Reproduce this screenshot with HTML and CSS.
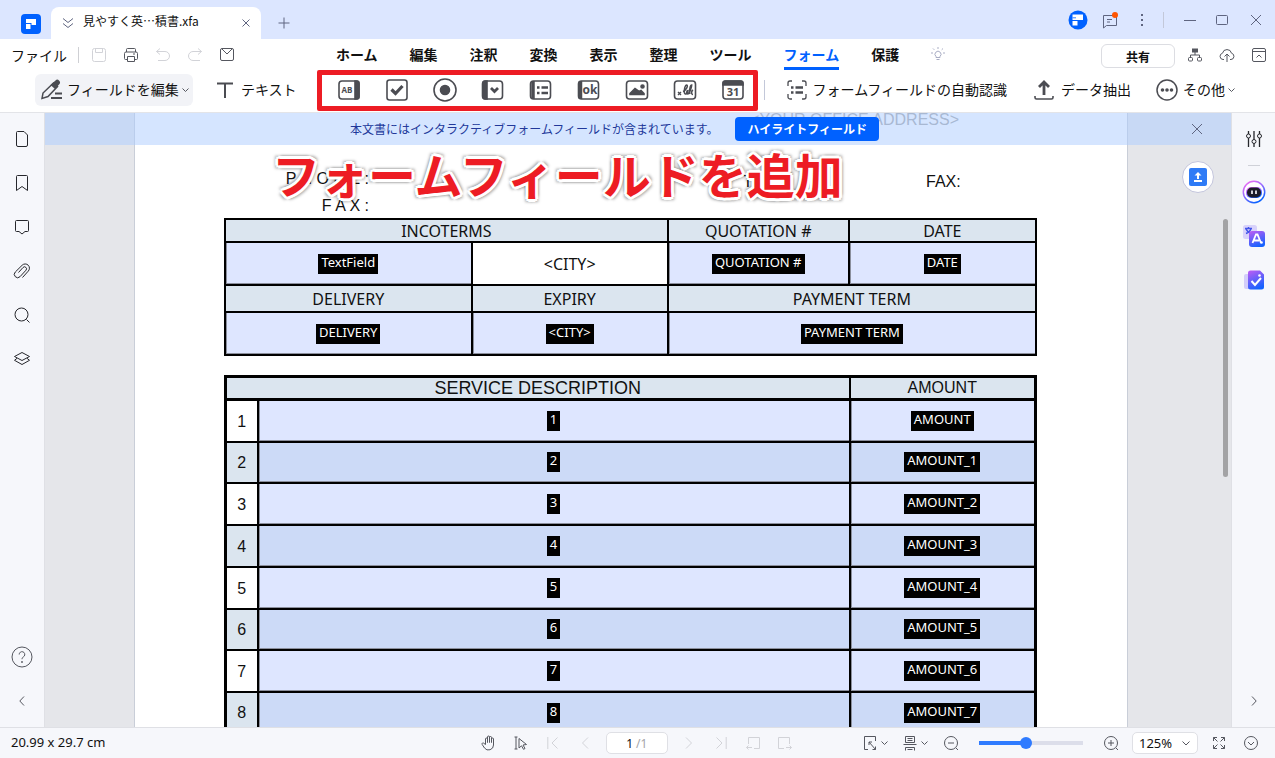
FILE: index.html
```html
<!DOCTYPE html>
<html lang="ja">
<head>
<meta charset="utf-8">
<meta name="viewport" content="width=device-width, initial-scale=1">
<title>見やすく英…積書.xfa</title>
<link rel="stylesheet" href="styles.css">
</head>
<body>
<header class="titlebar">
  <svg class="app-logo" width="20" height="20" viewBox="0 0 20 20"><rect width="20" height="20" rx="4" fill="#0061ff"/><path d="M5 5h10v6h-4.500V9H5z" fill="#fff"/><path d="M5 10h4.500v5H5z" fill="#fff"/></svg>
  <div class="doc-tab">
    <svg width="12" height="12" viewBox="0 0 12 12" class="line muted"><path d="M1 1.500l5 4 5-4M1 6.500l5 4 5-4"/></svg>
    <span class="doc-name">見やすく英…積書.xfa</span>
    <button class="tab-close" aria-label="閉じる"><svg width="8" height="8" viewBox="0 0 8 8" class="line muted"><path d="M.5.5l7 7M7.500.5l-7 7"/></svg></button>
  </div>
  <button class="icon-btn" aria-label="新しいタブ"><svg width="12" height="12" viewBox="0 0 12 12" class="line muted"><path d="M6 .5v11M.5 6h11"/></svg></button>
  <div class="window-tools">
    <button class="icon-btn" aria-label="アカウント"><svg width="20" height="20" viewBox="0 0 20 20"><circle cx="10" cy="10" r="9.500" fill="#0061ff"/><path d="M4.500 4.500H15V10H4.500z" fill="#fff"/><path d="M4.500 11h5v4.500h-5z" fill="#fff"/><path d="M4.500 7.800H8" stroke="#0061ff" stroke-width=".8"/></svg></button>
    <button class="icon-btn" aria-label="お知らせ"><svg width="18" height="18" viewBox="0 0 18 18"><g class="line muted"><path d="M2.500 4.500h13v10h-10l-3 2.500z"/><path d="M6 8.500h5M6 11h3"/></g><circle cx="14" cy="4" r="3" fill="#ff5500"/></svg></button>
    <button class="icon-btn" aria-label="メニュー"><svg width="4" height="14" viewBox="0 0 4 14" fill="#5f6580"><rect x="1" y="1" width="2" height="2"/><rect x="1" y="6" width="2" height="2"/><rect x="1" y="11" width="2" height="2"/></svg></button>
    <span class="divider"></span>
    <button class="icon-btn" aria-label="最小化"><svg width="12" height="12" viewBox="0 0 12 12" class="line muted"><path d="M0 6.500h12"/></svg></button>
    <button class="icon-btn" aria-label="最大化"><svg width="12" height="12" viewBox="0 0 12 12" class="line muted"><rect x=".5" y="1.500" width="11" height="9" rx="1"/></svg></button>
    <button class="icon-btn window-close" aria-label="ウィンドウを閉じる"><svg width="12" height="12" viewBox="0 0 12 12" class="line muted"><path d="M1 1l10 10M11 1L1 11"/></svg></button>
  </div>
</header>

<div class="menubar">
  <button class="file-btn">ファイル</button>
  <span class="divider"></span>
  <div class="quick">
    <button class="icon-btn" disabled aria-label="保存"><svg width="16" height="16" viewBox="0 0 16 16" class="line faint"><rect x="1.500" y="1.500" width="13" height="13" rx="2"/><path d="M4.500 1.500v4h7v-4"/></svg></button>
    <button class="icon-btn" aria-label="印刷"><svg width="16" height="16" viewBox="0 0 16 16" class="line"><path d="M3.500 5V2.500a1 1 0 011-1h7a1 1 0 011 1V5M4 12.500H2.500a1 1 0 01-1-1v-5a1.500 1.500 0 011.500-1.500h10a1.500 1.500 0 011.500 1.500v5a1 1 0 01-1 1H12M4.500 9.500h7v5h-7zM10 7h2"/></svg></button>
    <button class="icon-btn" disabled aria-label="元に戻す"><svg width="16" height="16" viewBox="0 0 16 16" class="line faint"><path d="M5 1.500l-3.500 3L5 7.500M1.500 4.500H10a4.500 4.500 0 010 9H3"/></svg></button>
    <button class="icon-btn" disabled aria-label="やり直し"><svg width="16" height="16" viewBox="0 0 16 16" class="line faint"><path d="M11 1.500l3.500 3L11 7.500M14.500 4.500H6a4.500 4.500 0 000 9h7"/></svg></button>
    <button class="icon-btn" aria-label="メール"><svg width="16" height="16" viewBox="0 0 16 16" class="line"><rect x="1.500" y="1.500" width="13" height="12" rx="1.500"/><path d="M3 2l5 5 5-5"/></svg></button>
  </div>
  <nav class="ribbon-tabs">
    <button>ホーム</button><button>編集</button><button>注釈</button><button>変換</button><button>表示</button><button>整理</button><button>ツール</button><button class="active">フォーム</button><button>保護</button>
    <button aria-label="ヒント"><svg width="14" height="14" viewBox="0 0 14 14" class="line hint"><path d="M5 9.500a3 3 0 114 0v1H5zM5.500 12.500h3M7 0v2M0 6h2M12 6h2M2 1.500l1.300 1.300M12 1.500l-1.300 1.300"/></svg></button>
  </nav>
  <button class="share-btn">共有</button>
  <button class="icon-btn" aria-label="構成"><svg width="16" height="16" viewBox="0 0 16 16" class="line"><rect x="5.500" y="2" width="5" height="3" fill="#55575f"/><path d="M8 5v3M3.500 10V8h9v2"/><rect x="1.500" y="10.500" width="4" height="3.500" rx="1"/><rect x="10.500" y="10.500" width="4" height="3.500" rx="1"/></svg></button>
  <button class="icon-btn" aria-label="クラウド"><svg width="16" height="16" viewBox="0 0 16 16" class="line"><path d="M5 12.500H4a3.200 3.200 0 01-.5-6.300 4.600 4.600 0 019 0A3.200 3.200 0 0112 12.500h-1M8 15V7.500M5.500 9.500L8 7l2.500 2.500"/></svg></button>
  <button class="icon-btn" aria-label="折りたたむ"><svg width="16" height="16" viewBox="0 0 16 16" class="line"><rect x="1.500" y="1.500" width="13" height="13" rx="1.500"/><path d="M1.500 4.500h13M5.500 10.500l2.500-2.500 2.500 2.500"/></svg></button>
</div>

<div class="toolbar">
  <button class="tool-btn edit-btn"><svg width="24" height="22" viewBox="0 0 24 22"><path d="M2 19.500l1-5.500L13.500 4l4 3.500L8 17.500z" fill="none" stroke="#4b4c52" stroke-width="1.500"/><path d="M10.500 6l5-4.500a2.400 2.400 0 013.500 0 2.600 2.600 0 01.500 3.500l-4.500 5z" fill="#4b4c52"/><path d="M15 14.500h7M11 19h11" stroke="#4b4c52" stroke-width="2"/></svg><span>フィールドを編集</span><svg width="7" height="5" viewBox="0 0 7 5" class="line"><path d="M.5.5l3 3 3-3"/></svg></button>
  <button class="tool-btn text-btn"><svg width="16" height="16" viewBox="0 0 16 16" fill="none" stroke="#4b4c52" stroke-width="2"><path d="M0 1.500h16M8 1.500V16"/></svg><span>テキスト</span></button>
  <div class="field-tools">
    <button aria-label="テキストフィールド"><svg width="24" height="24" viewBox="0 0 24 24" class="tool"><rect x="2" y="3" width="20" height="18" rx="3"/><path d="M18 3h2a2 2 0 012 2v14a2 2 0 01-2 2h-2z" class="solid"/><text x="10" y="15" font-size="8" font-weight="700" text-anchor="middle" class="icon-text">AB</text></svg></button>
    <button aria-label="チェックボックス"><svg width="24" height="24" viewBox="0 0 24 24" class="tool"><rect x="2" y="2" width="20" height="20" rx="2.500"/><path d="M6.500 11.500l4 4 7-7.500" stroke-width="3.200"/></svg></button>
    <button aria-label="ラジオボタン"><svg width="24" height="24" viewBox="0 0 24 24" class="tool"><circle cx="12" cy="12" r="11"/><circle cx="12" cy="12" r="4.500" class="solid"/></svg></button>
    <button aria-label="コンボボックス"><svg width="24" height="24" viewBox="0 0 24 24" class="tool"><rect x="1.500" y="3" width="20" height="18" rx="3"/><path d="M6 3H4a2 2 0 00-2 2v14a2 2 0 002 2h2z" class="solid"/><path d="M10 10l3.500 3.500 3.500-3.500" stroke-width="2.800"/></svg></button>
    <button aria-label="リストボックス"><svg width="24" height="24" viewBox="0 0 24 24" class="tool"><rect x="1.500" y="3" width="20" height="18" rx="3"/><path d="M4 3v18" stroke-width="3.500"/><path d="M8 9.500h2.500M12.500 9.500H19M8 15h2.500M12.500 15H19" stroke-width="2.400"/></svg></button>
    <button aria-label="プッシュボタン"><svg width="24" height="24" viewBox="0 0 24 24" class="tool"><rect x="1.500" y="3" width="20" height="18" rx="3"/><path d="M3.500 3v18" stroke-width="3.500"/><text x="13" y="16" font-size="12" font-weight="700" text-anchor="middle" class="icon-text">ok</text></svg></button>
    <button aria-label="画像フィールド"><svg width="24" height="24" viewBox="0 0 24 24" class="tool"><rect x="1.500" y="3" width="21" height="18" rx="3"/><path d="M5 16.500v-1l5-5 4 3 2-1 3 3v1z" class="solid"/><circle cx="17.500" cy="8.500" r="1.500" class="solid"/></svg></button>
    <button aria-label="署名フィールド"><svg width="24" height="24" viewBox="0 0 24 24" class="tool"><rect x="1.500" y="3" width="21" height="18" rx="3"/><path d="M5 14l3 3M8 14l-3 3" stroke-width="1.400"/><path d="M10 13.500c3-1 5.500-6 3.800-6.500-1.800 0-3 5-2.300 8 .8 2.500 3.500 0 3.500-2.500-1.500 0-2 3.500-.3 3.500 2 0 4-7 4-9-1.700 0-2.700 6.500-1.700 9M20 12c-1.800 1-2 4.500 0 4.500" stroke-width="1.500"/></svg></button>
    <button aria-label="日付フィールド"><svg width="24" height="24" viewBox="0 0 24 24" class="tool"><rect x="2" y="3" width="20" height="18" rx="3"/><path d="M2 5a2 2 0 012-2h16a2 2 0 012 2v2H2z" class="solid"/><text x="12" y="18" font-size="11" font-weight="700" text-anchor="middle" class="icon-text">31</text></svg></button>
  </div>
  <span class="divider"></span>
  <button class="tool-btn auto-btn"><svg width="20" height="20" viewBox="0 0 20 20" class="tool"><path d="M5 1H3a2 2 0 00-2 2v3M15 1h2a2 2 0 012 2v3M5 19H3a2 2 0 01-2-2v-3M15 19h2a2 2 0 002-2v-3" stroke-width="1.300"/><path d="M4 7.500h2.500M8.500 7.500H16M4 12.500h2.500M8.500 12.500H16" stroke-width="2.400"/></svg><span>フォームフィールドの自動認識</span></button>
  <button class="tool-btn extract-btn"><svg width="20" height="20" viewBox="0 0 20 20" class="tool"><path d="M10 15V2M5 7l5-5 5 5" stroke-width="2.800"/><path d="M1 16v1.500a1.500 1.500 0 001.500 1.500h15a1.500 1.500 0 001.500-1.500V16"/></svg><span>データ抽出</span></button>
  <button class="tool-btn other-btn"><svg width="22" height="22" viewBox="0 0 22 22" class="tool"><circle cx="11" cy="11" r="10" stroke-width="1.500"/><circle cx="6.500" cy="11" r="1" class="solid"/><circle cx="11" cy="11" r="1" class="solid"/><circle cx="15.500" cy="11" r="1" class="solid"/></svg><span>その他</span><svg width="7" height="5" viewBox="0 0 7 5" class="line"><path d="M.5.5l3 3 3-3"/></svg></button>
</div>

<main class="workspace">
  <aside class="rail rail-left">
    <button aria-label="サムネイル"><svg width="18" height="18" viewBox="0 0 18 18" class="line dark"><path d="M4.500 1.500h6.500l3.500 3.500v10a1.500 1.500 0 01-1.500 1.500H5A1.500 1.500 0 013.500 15V2.500a1 1 0 011-1z"/></svg></button>
    <button aria-label="ブックマーク"><svg width="18" height="18" viewBox="0 0 18 18" class="line dark"><path d="M3.500 16.500V2.500a1 1 0 011-1h9a1 1 0 011 1v14L9 12.500z"/></svg></button>
    <button aria-label="コメント"><svg width="18" height="18" viewBox="0 0 18 18" class="line dark"><path d="M3.500 2.500h11a1 1 0 011 1v9a1 1 0 01-1 1H12l-3 2.500-3-2.500H3.500a1 1 0 01-1-1v-9a1 1 0 011-1z"/></svg></button>
    <button aria-label="添付ファイル"><svg width="18" height="18" viewBox="0 0 18 18" class="line dark"><path d="M9.500 15.500l5.700-6.300a4.200 4.200 0 00-6-6L2.300 10a3.300 3.300 0 004.700 4.700l6-6.500a2 2 0 00-3-2.700L5.500 10.500"/></svg></button>
    <button aria-label="検索"><svg width="18" height="18" viewBox="0 0 18 18" class="line dark"><circle cx="8.500" cy="8.500" r="6.500"/><path d="M13.500 13.500l3 3"/></svg></button>
    <button aria-label="レイヤー"><svg width="18" height="18" viewBox="0 0 18 18" class="line dark"><path d="M9 2.500l7.500 4-7.500 4-7.500-4zM4 8.300l-2.500 2L9 14.500l7.500-4.200-2.500-2"/></svg></button>
    <button class="push-down" aria-label="ヘルプ"><svg width="22" height="22" viewBox="0 0 22 22" class="line"><circle cx="11" cy="11" r="10"/><path d="M8.200 8.500a2.800 2.800 0 115 1.700c-1 .9-2.200 1.300-2.200 3"/><circle cx="11" cy="16" r=".6"/></svg></button>
    <button aria-label="左パネル"><svg width="6" height="10" viewBox="0 0 6 10" class="line"><path d="M5 .5L.8 5 5 9.500"/></svg></button>
  </aside>

  <section class="viewer">
    <div class="sheet">
      <p class="office">&lt;YOUR OFFICE ADDRESS&gt;</p>
      <div class="contact">
        <div class="contact-left"><p>P H O N E :</p><p>F A X :</p></div>
        <span></span>
        <p>TEL:</p>
        <p>FAX:</p>
      </div>
      <table class="terms">
        <colgroup><col class="c1"><col class="c2"><col class="c3"><col class="c4"></colgroup>
        <tr class="head"><th colspan="2">INCOTERMS</th><th>QUOTATION #</th><th>DATE</th></tr>
        <tr class="entry"><td class="field"><span class="chip">TextField</span></td><td class="plain">&lt;CITY&gt;</td><td class="field"><span class="chip">QUOTATION #</span></td><td class="field"><span class="chip">DATE</span></td></tr>
        <tr class="head tall"><th>DELIVERY</th><th>EXPIRY</th><th colspan="2">PAYMENT TERM</th></tr>
        <tr class="entry"><td class="field"><span class="chip">DELIVERY</span></td><td class="field"><span class="chip">&lt;CITY&gt;</span></td><td class="field" colspan="2"><span class="chip">PAYMENT TERM</span></td></tr>
      </table>
      <table class="services">
        <colgroup><col class="n"><col><col class="amount"></colgroup>
        <thead><tr><th colspan="2" class="wide-head">SERVICE DESCRIPTION</th><th>AMOUNT</th></tr></thead>
        <tbody>
          <tr><th>1</th><td class="field"><span class="chip">1</span></td><td class="field"><span class="chip">AMOUNT</span></td></tr>
          <tr><th>2</th><td class="field"><span class="chip">2</span></td><td class="field"><span class="chip">AMOUNT_1</span></td></tr>
          <tr><th>3</th><td class="field"><span class="chip">3</span></td><td class="field"><span class="chip">AMOUNT_2</span></td></tr>
          <tr><th>4</th><td class="field"><span class="chip">4</span></td><td class="field"><span class="chip">AMOUNT_3</span></td></tr>
          <tr><th>5</th><td class="field"><span class="chip">5</span></td><td class="field"><span class="chip">AMOUNT_4</span></td></tr>
          <tr><th>6</th><td class="field"><span class="chip">6</span></td><td class="field"><span class="chip">AMOUNT_5</span></td></tr>
          <tr><th>7</th><td class="field"><span class="chip">7</span></td><td class="field"><span class="chip">AMOUNT_6</span></td></tr>
          <tr><th>8</th><td class="field"><span class="chip">8</span></td><td class="field"><span class="chip">AMOUNT_7</span></td></tr>
        </tbody>
      </table>
    </div>
    <div class="notice">
      <div class="notice-body"><span>本文書にはインタラクティブフォームフィールドが含まれています。</span><button class="highlight-btn">ハイライトフィールド</button></div>
      <button class="icon-btn" aria-label="通知を閉じる"><svg width="12" height="12" viewBox="0 0 12 12" class="line muted"><path d="M1 1l10 10M11 1L1 11"/></svg></button>
    </div>
    <p class="callout">フォームフィールドを追加</p>
    <button class="upload-btn" aria-label="アップロード"><svg width="18" height="18" viewBox="0 0 18 18"><rect width="18" height="18" rx="2" fill="#2f7bf6"/><path d="M9 4l3.500 3.500H10V11H8V7.500H5.500zM5 12h8v2H5z" fill="#fff"/></svg></button>
    <div class="scroll-thumb"></div>
  </section>

  <aside class="rail rail-right">
    <button aria-label="プロパティ"><svg width="18" height="18" viewBox="0 0 18 18" class="line dark"><path d="M3.500 1v3M3.500 8v9M9 1v8.500M9 13.500V17M14.500 1v3M14.500 8v9" stroke-width="1.300"/><circle cx="3.500" cy="6" r="2"/><circle cx="9" cy="11.500" r="2"/><circle cx="14.500" cy="6" r="2"/></svg></button>
    <span class="rail-rule"></span>
    <button aria-label="AIアシスタント"><svg width="24" height="24" viewBox="0 0 24 24"><defs><linearGradient id="ring" x1="0" y1="0" x2=".6" y2="1"><stop offset="0" stop-color="#ff6cf0"/><stop offset=".5" stop-color="#9a6bff"/><stop offset="1" stop-color="#0a62ff"/></linearGradient><linearGradient id="tile" x1=".2" y1="0" x2=".6" y2="1"><stop offset="0" stop-color="#b55cf5"/><stop offset="1" stop-color="#1263ff"/></linearGradient></defs><circle cx="12" cy="12" r="10.700" fill="#fff" stroke="url(#ring)" stroke-width="1.500"/><rect x="4" y="7" width="16" height="11" rx="5" fill="url(#ring)"/><rect x="5" y="7.500" width="14" height="10" rx="4.800" fill="#1c1c28"/><path d="M10 10.500v3.500M14 10.500v3.500" stroke="#fff" stroke-width="1.600"/></svg></button>
    <button aria-label="翻訳"><svg width="24" height="24" viewBox="0 0 24 24"><rect x="1" y="1" width="14" height="14" rx="2.500" fill="#d8d2fb"/><path d="M3 4.500h7M6.500 3v1.500M9 4.500c-.5 2-2.500 4-5 5M4 5c1 2 2.500 3.500 5 4" fill="none" stroke="#4355e8" stroke-width="1.400"/><rect x="7" y="7" width="16" height="16" rx="3" fill="url(#tile)"/><path d="M10.500 19L14 10.500h1.500L19 19M12 16.500h5" fill="none" stroke="#fff" stroke-width="1.800"/><circle cx="19.500" cy="18.500" r="1.300" fill="#fff"/></svg></button>
    <button aria-label="校正"><svg width="24" height="24" viewBox="0 0 24 24"><rect x="2" y="6" width="10" height="15" rx="2" fill="#d3cdfa"/><path d="M8.500 2.500H18l4 4V19a2.500 2.500 0 01-2.500 2.500h-11A2.500 2.500 0 016 19V5a2.500 2.500 0 012.500-2.500z" fill="url(#tile)"/><path d="M9.500 13l3.500 4 6-7" fill="none" stroke="#fff" stroke-width="2"/><circle cx="17.500" cy="7.500" r="1.300" fill="#fff"/></svg></button>
    <button class="push-down" aria-label="右パネル"><svg width="6" height="10" viewBox="0 0 6 10" class="line"><path d="M1 .5L5.200 5 1 9.500"/></svg></button>
  </aside>
</main>

<footer class="statusbar">
  <span class="page-size">20.99 x 29.7 cm</span>
  <div class="pager">
    <button class="icon-btn" aria-label="手のひら"><svg width="16" height="16" viewBox="0 0 16 16" class="line"><path d="M4.500 9.500V4a1 1 0 012 0v3.500V2a1 1 0 012 0v5.500V2.500a1 1 0 012 0v5V4a1 1 0 012 0v6a5 5 0 01-9 3L1.200 9.500a1 1 0 011.600-1.200z"/></svg></button>
    <button class="icon-btn" aria-label="選択"><svg width="14" height="14" viewBox="0 0 14 14" class="line"><path d="M.5 1h3M2 1v12M.5 13h3M5 2.500l7.500 6-3.500.5 2 3.500-1.500.8-2-3.500L5 12z"/></svg></button>
    <button class="icon-btn" disabled aria-label="最初のページ"><svg width="12" height="12" viewBox="0 0 12 12" class="line faint"><path d="M.8 0v12M10.500.5L5 6l5.500 5.500"/></svg></button>
    <button class="icon-btn" disabled aria-label="前のページ"><svg width="8" height="12" viewBox="0 0 8 12" class="line faint"><path d="M7 .5L1.500 6 7 11.500"/></svg></button>
    <div class="page-box"><input type="text" value="1" aria-label="ページ番号"><span>/1</span></div>
    <button class="icon-btn" disabled aria-label="次のページ"><svg width="8" height="12" viewBox="0 0 8 12" class="line faint"><path d="M1 .5L6.500 6 1 11.500"/></svg></button>
    <button class="icon-btn" disabled aria-label="最後のページ"><svg width="12" height="12" viewBox="0 0 12 12" class="line faint"><path d="M11.200 0v12M1.500.5L7 6l-5.500 5.500"/></svg></button>
    <button class="icon-btn" disabled aria-label="前の表示"><svg width="14" height="14" viewBox="0 0 14 14" class="line faint"><path d="M2.500 8V1.500h11v11H8M6 11.500H.5M2.500 9.500l-2 2 2 2"/></svg></button>
    <button class="icon-btn" disabled aria-label="次の表示"><svg width="14" height="14" viewBox="0 0 14 14" class="line faint"><path d="M11.500 8V1.500H.5v11H6M8 11.500h5.500M11.500 9.500l2 2-2 2"/></svg></button>
  </div>
  <div class="zoom">
    <button class="icon-btn wide" aria-label="表示サイズ"><svg width="14" height="16" viewBox="0 0 14 16" class="line"><path d="M5 14.500H1.500v-13h11V6M6 7l6.500 7.500M6 10V7h3M12.500 11.500v3h-3"/></svg><svg width="7" height="5" viewBox="0 0 7 5" class="line"><path d="M.5.500l3 3 3-3"/></svg></button>
    <button class="icon-btn wide" aria-label="ページ表示"><svg width="14" height="16" viewBox="0 0 14 16" class="line"><path d="M2.500 1.500h9v6h-9zM4.500 3.500h5M4.500 5.500h5M.5 9.500h13M2.500 15.500v-3h9v3M4.500 14.500h5"/></svg><svg width="7" height="5" viewBox="0 0 7 5" class="line"><path d="M.5.500l3 3 3-3"/></svg></button>
    <button class="icon-btn" aria-label="縮小"><svg width="16" height="16" viewBox="0 0 16 16" class="line"><circle cx="8" cy="8" r="6.500"/><path d="M5 8h6M13 13l2 2"/></svg></button>
    <input class="zoom-range" type="range" min="0" max="100" value="45" aria-label="ズーム">
    <button class="icon-btn" aria-label="拡大"><svg width="16" height="16" viewBox="0 0 16 16" class="line"><circle cx="8" cy="8" r="6.500"/><path d="M5 8h6M8 5v6M13 13l2 2"/></svg></button>
    <div class="zoom-select"><select aria-label="倍率"><option>125%</option></select><svg width="8" height="5" viewBox="0 0 8 5" class="line"><path d="M.5.500L4 4 7.500.500"/></svg></div>
    <button class="icon-btn" aria-label="全画面"><svg width="12" height="12" viewBox="0 0 12 12" class="line"><path d="M.5 4V.5H4M.5.5L4.500 4.500M8 .5h3.500V4M11.500.5l-4 4M.5 8v3.500H4M.5 11.500l4-4M8 11.500h3.500V8M11.500 11.500l-4-4"/></svg></button>
    <button class="icon-btn" aria-label="その他の表示"><svg width="16" height="16" viewBox="0 0 16 16" class="line"><circle cx="8" cy="8" r="6.500"/><path d="M5 7l3 3 3-3"/></svg></button>
  </div>
</footer>
</body>
</html>
```
FILE: styles.css
```css
* { box-sizing: border-box; }

body {
  margin: 0;
  height: 100vh;
  display: flex;
  flex-direction: column;
  overflow: hidden;
  background: #fff;
  color: #111;
  font-family: "Noto Sans", "Noto Sans CJK JP", sans-serif;
  font-size: 14px;
}

p { margin: 0; }

button {
  display: flex;
  align-items: center;
  justify-content: center;
  flex: none;
  padding: 0;
  border: 0;
  background: none;
  color: inherit;
  font: inherit;
  font-family: "Noto Sans CJK JP", sans-serif;
  white-space: nowrap;
}

svg { flex: none; }

.line { fill: none; stroke: #55575f; stroke-width: 1; }
.line.muted { stroke: #5f6580; }
.line.faint { stroke: #d2d3d8; }
.line.dark { stroke: #26272c; }
.line.hint { stroke: #a9adc4; }
.tool { fill: none; stroke: #4b4c52; stroke-width: 1.6; }
.tool .solid { fill: #4b4c52; }
.icon-text { fill: #4b4c52; stroke: none; font-family: "Open Sans", sans-serif; }

.icon-btn { width: 32px; height: 28px; }
.icon-btn.wide { width: 40px; gap: 4px; }

.divider { flex: none; width: 1px; height: 16px; background: #c3c8d9; }

/* Title bar */
.titlebar {
  flex: none;
  display: flex;
  align-items: center;
  height: 39px;
  padding: 0 3px 0 21px;
  background: #dce6ff;
}
.app-logo { margin-top: 8px; }
.doc-tab {
  align-self: flex-end;
  display: flex;
  align-items: center;
  width: 210px;
  height: 32px;
  margin: 0 7px 0 10px;
  padding: 0 10px 0 11px;
  border-radius: 8px 8px 0 0;
  background: #fff;
}
.doc-name {
  flex: 1;
  margin-left: 9px;
  padding-bottom: 4px;
  font: 12px/26px "Noto Sans CJK JP", sans-serif;
}
.tab-close { width: 10px; height: 16px; }
.titlebar > .icon-btn { margin-top: 6px; }
.window-tools { display: flex; align-items: center; margin-left: auto; }
.window-tools .divider { margin: 0 10px 0 5px; }
.window-close { margin-left: 2px; }

/* Menu bar */
.menubar { flex: none; display: flex; align-items: center; height: 31px; }
.file-btn { height: 30px; padding: 0 11px; }
.menubar > .divider { background: #cfd0d4; }
.quick { display: flex; margin-left: 4px; }
.ribbon-tabs { display: flex; align-self: stretch; gap: 32px; margin: 0 auto 0 93px; }
.ribbon-tabs button { font-weight: 700; border-bottom: 3px solid transparent; padding-top: 2px; }
.ribbon-tabs .active { color: #0061ff; border-color: #0061ff; }
.share-btn {
  width: 74px;
  height: 24px;
  margin: 3px 4px 0 0;
  border: 1px solid #dcdde2;
  border-radius: 6px;
  font-size: 12px;
  font-weight: 700;
}

/* Form toolbar */
.toolbar {
  flex: none;
  display: flex;
  align-items: center;
  height: 43px;
  padding: 0 0 2px 35px;
  border-bottom: 1px solid #e3e4e8;
}
.tool-btn { height: 32px; }
.tool-btn span { padding-bottom: 3px; }
.edit-btn {
  width: 158px;
  gap: 3px;
  justify-content: flex-start;
  padding-left: 5px;
  border-radius: 6px;
  background: #f2f3f7;
}
.text-btn { gap: 8px; margin-left: 24px; }
.field-tools {
  flex: none;
  display: flex;
  align-items: center;
  gap: 12px;
  height: 41px;
  margin-left: 20px;
  padding: 0 2px 0 9px;
  border: 5px solid #ed1c24;
  border-radius: 2px;
}
.field-tools button { width: 36px; height: 28px; }
.toolbar > .divider { margin: 0 22px 0 6px; height: 20px; }
.auto-btn { gap: 6px; }
.extract-btn { gap: 7px; margin-left: 27px; }
.other-btn { gap: 5px; margin-left: 25px; }
.other-btn svg:last-child { margin-left: -2px; }

/* Workspace */
.workspace { flex: 1; min-height: 0; display: flex; }
.rail {
  flex: none;
  display: flex;
  flex-direction: column;
  align-items: center;
  width: 45px;
  padding: 4px 0;
  background: #f6f7fb;
}
.rail button { width: 44px; height: 44px; }
.rail .push-down { margin-top: auto; }
.rail-left { border-right: 1px solid #dfe0e5; }
.rail-right { width: 44px; border-left: 1px solid #dfe0e5; }
.rail-rule { width: 12px; height: 1px; margin: 4px 0; background: #cfd1d8; }

.viewer {
  position: relative;
  flex: 1;
  min-width: 0;
  overflow: hidden;
  display: flex;
  padding: 0 103px 0 89px;
  background: #e5e6ea;
}
.sheet {
  flex: 1;
  min-width: 0;
  padding: 0 90px 0 89px;
  border: solid #c9ced8;
  border-width: 0 1px;
  background: #fff;
  font-family: "Liberation Sans", sans-serif;
  font-size: 16px;
}
.office { height: 52px; padding-right: 78px; line-height: 14px; text-align: right; color: #a5a5a5; }
.contact { display: grid; grid-template-columns: 145px 374px 183px 1fr; line-height: 34px; height: 53px; }
.contact-left { text-align: right; line-height: 27px; }

.sheet table { width: 100%; table-layout: fixed; border-collapse: collapse; text-align: center; }
.sheet th, .sheet td { padding: 0; border: 2px solid #000; font-weight: 400; line-height: 20px; }
.terms { font-family: "Noto Sans", sans-serif; }
.terms .c1 { width: 30.4%; }
.terms .c2 { width: 24.2%; }
.terms .c3 { width: 22.3%; }
.terms .head { height: 23px; background: #dbe5ef; }
.terms .tall { height: 27px; }
.terms .entry { height: 43px; }
.sheet .field { background: #dee6ff; box-shadow: inset 1px -1px #8b8f9c; }
.chip {
  display: inline-block;
  height: 20px;
  padding: 0 3px;
  background: #000;
  color: #fff;
  font: 13px/17px "Noto Sans", sans-serif;
  vertical-align: middle;
}

.services { margin-top: 19px; border: 3px solid #000; }
.services .n { width: 32px; }
.services .amount { width: 186px; }
.services thead { background: #dbe5ef; }
.sheet .services thead th { height: 22px; border-top-width: 3px; border-bottom-width: 3px; }
.services .wide-head { font-size: 18px; }
.services tbody tr { height: 42px; }
.services tbody th { padding-top: 2px; }
.services tbody tr:nth-child(even) { background: #dbe5ef; }
.services tbody tr:nth-child(4n + 2) { height: 41px; }
.services tbody tr:nth-child(even) .field { background: #ccdaf7; }

.notice {
  position: absolute;
  inset: 0 0 auto 0;
  display: flex;
  align-items: center;
  height: 32px;
  padding-right: 18px;
  background: rgba(171, 203, 255, .5);
  color: #21389a;
  font: 12px/18px "Noto Sans CJK JP", sans-serif;
}
.notice-body {
  flex: 1;
  display: flex;
  align-items: center;
  justify-content: center;
  gap: 17px;
  padding-left: 3px;
}
.highlight-btn {
  height: 24px;
  padding: 0 12px;
  border-radius: 4px;
  background: #0061ff;
  color: #fff;
  font-weight: 700;
}

.callout {
  position: absolute;
  top: 25px;
  left: 227px;
  color: #ed1c24;
  font: 700 48px/70px "Noto Sans CJK JP", sans-serif;
  white-space: nowrap;
  text-shadow:
    3px 0 #fff, -3px 0 #fff, 0 3px #fff, 0 -3px #fff,
    2px 2px #fff, -2px 2px #fff, 2px -2px #fff, -2px -2px #fff,
    3px 3px 3px rgba(0, 0, 0, .35), -3px -3px 3px rgba(0, 0, 0, .35),
    3px -3px 3px rgba(0, 0, 0, .35), -3px 3px 3px rgba(0, 0, 0, .35);
}
.upload-btn {
  position: absolute;
  top: 48px;
  right: 17px;
  width: 32px;
  height: 32px;
  border: 1px solid #c3c5dc;
  border-radius: 50%;
  background: #fff;
}
.scroll-thumb {
  position: absolute;
  top: 106px;
  right: 3px;
  width: 5px;
  height: 258px;
  border-radius: 3px;
  background: #a3a3a5;
}

/* Status bar */
.statusbar {
  flex: none;
  display: grid;
  grid-template-columns: 1fr auto 1fr;
  align-items: center;
  height: 31px;
  padding-right: 8px;
  border-top: 1px solid #dfe0e5;
  background: #f6f7fb;
  font-size: 13px;
}
.page-size { padding: 0 0 2px 11px; }
.pager, .zoom { display: flex; align-items: center; }
.pager { margin-left: 7px; }
.zoom { justify-content: flex-end; }
.page-box {
  display: flex;
  align-items: center;
  width: 62px;
  height: 22px;
  margin: 0 5px;
  border: 1px solid #dfe0e5;
  border-radius: 5px;
  background: #fff;
  color: #a5a5a8;
  font-size: 12px;
}
.page-box input {
  width: 26px;
  padding: 0;
  border: 0;
  background: none;
  color: #111;
  font: inherit;
  text-align: right;
}
.page-box span { padding-left: 3px; }

.zoom-range {
  appearance: none;
  width: 104px;
  height: 12px;
  margin: 0 12px;
  background: linear-gradient(#2f7bff, #2f7bff) left center / 45% 4px no-repeat,
    linear-gradient(#dcdeea, #dcdeea) center / 100% 4px no-repeat;
}
.zoom-range::-webkit-slider-thumb {
  appearance: none;
  width: 12px;
  height: 12px;
  border-radius: 50%;
  background: #2f7bff;
}
.zoom-select {
  display: flex;
  align-items: center;
  width: 66px;
  height: 22px;
  margin: 0 5px;
  padding: 0 7px 0 6px;
  border: 1px solid #dfe0e5;
  border-radius: 5px;
  background: #fff;
}
.zoom-select select {
  appearance: none;
  flex: 1;
  min-width: 0;
  padding: 0;
  border: 0;
  background: none;
  color: #111;
  font: inherit;
}
```
